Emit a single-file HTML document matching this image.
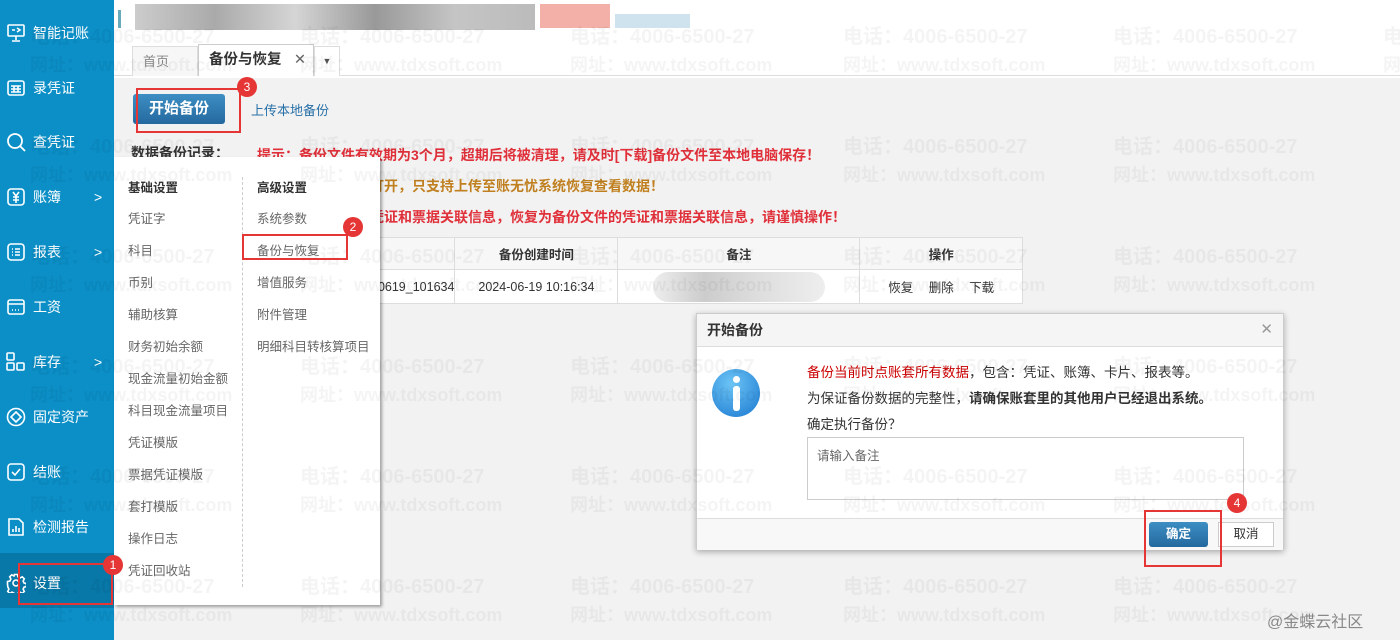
<!DOCTYPE html>
<html><head><meta charset="utf-8"><style>
*{margin:0;padding:0;box-sizing:border-box}
body{width:1400px;height:640px;overflow:hidden;background:#f2f2f2;font-family:"Liberation Sans","Noto Sans CJK SC",sans-serif;position:relative;font-size:13px;color:#333}
.abs{position:absolute}
.side{left:0;top:0;width:114px;height:640px;background:#0b8fc6}
.si{position:absolute;left:0;width:114px;height:40px;color:#fff;font-size:14px;line-height:40px;padding-left:33px}
.si svg{position:absolute;left:6px;top:10px}
.si .ar{position:absolute;left:94px;top:0;font-size:14px}
.wm{position:absolute;color:rgba(0,0,0,0.045);font-weight:bold;font-size:20px;white-space:nowrap;z-index:50;pointer-events:none}
.wm2{font-size:18px}
.red{color:#e0303a}
.badge{position:absolute;width:20px;height:20px;border-radius:50%;background:#e53535;color:#fff;font-size:12px;line-height:20px;text-align:center;z-index:60}
.rbox{position:absolute;border:2px solid #e53535;z-index:55}
.menu{left:114px;top:157px;width:266px;height:448px;background:#fff;box-shadow:2px 2px 3px rgba(0,0,0,.35);z-index:20}
.mi{position:absolute;font-size:12.5px;color:#666}
.btn{border-radius:3px;color:#fff;font-weight:bold;background:linear-gradient(#3d8ec3,#24699f);text-align:center}
td,th{border:1px solid #ddd}
</style></head><body>
<div class="abs side"></div>
<div class="si" style="top:13px"><svg width="20" height="20" viewBox="0 0 20 20" fill="none" stroke="#fff" stroke-width="1.6"><rect x="2" y="2" width="16" height="11" rx="1"/><path d="M10 13v4M6 18h8M6 7l3 0M11 5l3 2-3 2"/></svg>智能记账</div>
<div class="si" style="top:68px"><svg width="20" height="20" viewBox="0 0 20 20" fill="none" stroke="#fff" stroke-width="1.6"><rect x="2" y="3" width="16" height="14" rx="2"/><path d="M5 8h10M5 11h10M5 14h10M8 8v6M12 8v6"/></svg>录凭证</div>
<div class="si" style="top:122px"><svg width="22" height="22" viewBox="0 0 22 22" fill="none" stroke="#fff" stroke-width="1.8"><circle cx="9" cy="9" r="7"/><path d="M14 14l5 5"/></svg>查凭证</div>
<div class="si" style="top:177px"><svg width="20" height="20" viewBox="0 0 20 20" fill="none" stroke="#fff" stroke-width="1.6"><rect x="2" y="2" width="16" height="16" rx="3"/><path d="M7 5l3 4 3-4M10 9v7M7 10h6M7 13h6"/></svg>账簿<span class="ar">&gt;</span></div>
<div class="si" style="top:232px"><svg width="20" height="20" viewBox="0 0 20 20" fill="none" stroke="#fff" stroke-width="1.6"><rect x="2" y="2" width="16" height="16" rx="3"/><path d="M6 7h1M9 7h5M6 10h1M9 10h5M6 13h1M9 13h5"/></svg>报表<span class="ar">&gt;</span></div>
<div class="si" style="top:287px"><svg width="20" height="20" viewBox="0 0 20 20" fill="none" stroke="#fff" stroke-width="1.6"><rect x="2" y="3" width="16" height="14" rx="2"/><path d="M2 7h16M6 13h1M9 13h1M12 13h1"/></svg>工资</div>
<div class="si" style="top:342px"><svg width="20" height="20" viewBox="0 0 20 20" fill="none" stroke="#fff" stroke-width="1.6"><rect x="1" y="1" width="7" height="7" rx="1"/><rect x="1" y="11" width="7" height="7" rx="1"/><rect x="11" y="11" width="7" height="7" rx="1"/></svg>库存<span class="ar">&gt;</span></div>
<div class="si" style="top:397px"><svg width="20" height="20" viewBox="0 0 20 20" fill="none" stroke="#fff" stroke-width="1.6"><circle cx="10" cy="10" r="8.5"/><path d="M10 5l5 5-5 5-5-5z"/></svg>固定资产</div>
<div class="si" style="top:452px"><svg width="20" height="20" viewBox="0 0 20 20" fill="none" stroke="#fff" stroke-width="1.6"><rect x="2" y="2" width="16" height="16" rx="3"/><path d="M6 10l3 3 5-6"/></svg>结账</div>
<div class="si" style="top:507px"><svg width="20" height="20" viewBox="0 0 20 20" fill="none" stroke="#fff" stroke-width="1.6"><path d="M3 2h10l4 4v12H3z"/><path d="M7 15v-3M10 15v-6M13 15v-4"/></svg>检测报告</div>
<div class="abs" style="left:0;top:553px;width:114px;height:55px;background:#0878a8"></div>
<div class="si" style="top:563px"><svg width="20" height="20" viewBox="0 0 20 20" fill="none" stroke="#fff" stroke-width="1.6"><circle cx="10" cy="10" r="3"/><path d="M8.5 1.5h3l.5 2.5 2 1 2.3-1.2 2 2-1.2 2.3 1 2 2.4.5v3l-2.4.5-1 2 1.2 2.3-2 2-2.3-1.2-2 1-.5 2.4h-3l-.5-2.4-2-1-2.3 1.2-2-2 1.2-2.3-1-2L1.5 11.5v-3l2.4-.5 1-2L3.7 3.8l2-2L8 3l.5-1.5z"/></svg>设置</div>
<div class="rbox" style="left:18px;top:563px;width:95px;height:42px"></div>
<div class="badge" style="left:103px;top:555px">1</div>

<div class="abs" style="left:114px;top:0;width:1286px;height:78px;background:#fff"></div>
<div class="abs" style="left:118px;top:10px;width:3px;height:18px;background:#6ab"></div>
<div class="abs" style="left:135px;top:4px;width:400px;height:26px;background:linear-gradient(90deg,#ccc,#aaa 20%,#d5d5d5 40%,#999 60%,#c5c5c5 80%,#bbb)"></div>
<div class="abs" style="left:540px;top:4px;width:70px;height:24px;background:#f2b0a8"></div>
<div class="abs" style="left:615px;top:14px;width:75px;height:14px;background:#cfe3ef"></div>
<div class="abs" style="left:114px;top:75px;width:1286px;height:1px;background:#ddd"></div>
<div class="abs" style="left:132px;top:46px;width:66px;height:30px;border:1px solid #ddd;border-bottom:none;background:#f7f7f7;color:#888;line-height:29px;padding-left:10px">首页</div>
<div class="abs" style="left:198px;top:44px;width:116px;height:32px;border:1px solid #ccc;border-bottom:none;background:#fff;line-height:31px;padding-left:10px;font-size:14.5px;color:#333;font-weight:bold">备份与恢复<span style="position:absolute;right:7px;font-weight:normal;color:#666">✕</span></div>
<div class="abs" style="left:314px;top:46px;width:26px;height:30px;border:1px solid #ddd;border-bottom:none;background:#fff;text-align:center;line-height:29px;color:#555;font-size:9px">▼</div>

<div class="abs btn" style="left:133px;top:94px;width:92px;height:30px;line-height:30px;font-size:15px">开始备份</div>
<div class="rbox" style="left:136px;top:88px;width:105px;height:45px"></div>
<div class="badge" style="left:237px;top:77px">3</div>
<div class="abs" style="left:251px;top:100px;color:#2870a8;font-size:13px">上传本地备份</div>

<div class="abs" style="left:131px;top:143px;font-size:14px;font-weight:bold;color:#333">数据备份记录：</div>
<div class="abs red" style="left:257px;top:145px;font-size:14px;font-weight:bold">提示：备份文件有效期为3个月，超期后将被清理，请及时[下载]备份文件至本地电脑保存！</div>
<div class="abs" style="left:370px;top:176px;font-size:14px;font-weight:bold;color:#c08020">打开，只支持上传至账无忧系统恢复查看数据！</div>
<div class="abs red" style="left:370px;top:207px;font-size:14px;font-weight:bold">凭证和票据关联信息，恢复为备份文件的凭证和票据关联信息，请谨慎操作！</div>

<table class="abs" style="left:370px;top:237px;width:653px;height:67px;border-collapse:collapse;background:#fff;font-size:12.5px">
<tr style="height:32px;background:#f7f7f7"><th style="width:84px"></th><th style="width:163px">备份创建时间</th><th style="width:242px">备注</th><th>操作</th></tr>
<tr><td style="text-align:right;overflow:hidden">40619_101634</td><td style="text-align:center">2024-06-19 10:16:34</td><td><div style="margin:0 auto;width:172px;height:30px;border-radius:15px;background:linear-gradient(90deg,#eee,#ccc 30%,#ddd 60%,#eee)"></div></td><td style="text-align:center;word-spacing:12px">恢复 删除 下载</td></tr>
</table>

<div class="abs menu">
<div class="abs" style="left:128px;top:20px;border-left:1px dashed #ccc;height:410px"></div>
<div class="mi" style="left:14px;top:20px;color:#333;font-weight:bold">基础设置</div>
<div class="mi" style="left:143px;top:20px;color:#333;font-weight:bold">高级设置</div>
<div class="mi" style="left:14px;top:51px">凭证字</div>
<div class="mi" style="left:14px;top:83px">科目</div>
<div class="mi" style="left:14px;top:115px">币别</div>
<div class="mi" style="left:14px;top:147px">辅助核算</div>
<div class="mi" style="left:14px;top:179px">财务初始余额</div>
<div class="mi" style="left:14px;top:211px">现金流量初始金额</div>
<div class="mi" style="left:14px;top:243px">科目现金流量项目</div>
<div class="mi" style="left:14px;top:275px">凭证模版</div>
<div class="mi" style="left:14px;top:307px">票据凭证模版</div>
<div class="mi" style="left:14px;top:339px">套打模版</div>
<div class="mi" style="left:14px;top:371px">操作日志</div>
<div class="mi" style="left:14px;top:403px">凭证回收站</div>
<div class="mi" style="left:143px;top:51px">系统参数</div>
<div class="mi" style="left:143px;top:83px">备份与恢复</div>
<div class="mi" style="left:143px;top:115px">增值服务</div>
<div class="mi" style="left:143px;top:147px">附件管理</div>
<div class="mi" style="left:143px;top:179px">明细科目转核算项目</div>
</div>
<div class="rbox" style="left:242px;top:234px;width:106px;height:26px"></div>
<div class="badge" style="left:343px;top:217px">2</div>

<div class="abs" style="left:696px;top:313px;width:588px;height:237px;background:#fff;border:1px solid #ccc;box-shadow:0 2px 6px rgba(0,0,0,.3);z-index:30">
<div style="height:33px;background:#f5f5f5;border-bottom:1px solid #ddd;line-height:32px;padding-left:10px;font-weight:bold;font-size:14px">开始备份<span style="position:absolute;right:10px;top:0;color:#999;font-weight:normal;font-size:15px">✕</span></div>
<div class="abs" style="left:15px;top:55px;width:48px;height:48px;border-radius:50%;background:radial-gradient(circle at 40% 30%,#6cc4f5,#1a78d0)"><div style="position:absolute;left:21px;top:7px;width:7px;height:7px;border-radius:50%;background:#fff"></div><div style="position:absolute;left:21px;top:17px;width:7px;height:25px;border-radius:3px;background:#fff"></div></div>
<div class="abs" style="left:110px;top:46px;font-size:13.5px;line-height:26px;color:#333"><span style="color:#c00">备份当前时点账套所有数据</span>，包含：凭证、账簿、卡片、报表等。<br>为保证备份数据的完整性，<b>请确保账套里的其他用户已经退出系统。</b><br>确定执行备份？</div>
<div class="abs" style="left:110px;top:123px;width:437px;height:63px;border:1px solid #ccc;color:#666;padding:7px 9px;font-size:12.5px">请输入备注</div>
<div class="abs" style="left:0;top:204px;width:586px;height:32px;border-top:1px solid #ddd;background:#f8f8f8"></div>
<div class="abs btn" style="left:452px;top:208px;width:59px;height:25px;line-height:25px;font-size:12.5px">确定</div>
<div class="abs" style="left:521px;top:208px;width:56px;height:25px;line-height:23px;border:1px solid #ccc;background:#fff;text-align:center;font-size:12.5px">取消</div>
</div>
<div class="rbox" style="left:1144px;top:510px;width:78px;height:57px"></div>
<div class="badge" style="left:1227px;top:493px">4</div>

<div class="abs" style="left:1267px;top:608px;color:#888;font-size:16px;z-index:60">@金蝶云社区</div>

<div class="wm" style="left:30px;top:20px">电话：4006-6500-27</div><div class="wm wm2" style="left:30px;top:51px">网址：www.tdxsoft.com</div>
<div class="wm" style="left:300px;top:20px">电话：4006-6500-27</div><div class="wm wm2" style="left:300px;top:51px">网址：www.tdxsoft.com</div>
<div class="wm" style="left:570px;top:20px">电话：4006-6500-27</div><div class="wm wm2" style="left:570px;top:51px">网址：www.tdxsoft.com</div>
<div class="wm" style="left:843px;top:20px">电话：4006-6500-27</div><div class="wm wm2" style="left:843px;top:51px">网址：www.tdxsoft.com</div>
<div class="wm" style="left:1113px;top:20px">电话：4006-6500-27</div><div class="wm wm2" style="left:1113px;top:51px">网址：www.tdxsoft.com</div>
<div class="wm" style="left:1383px;top:20px">电话</div><div class="wm wm2" style="left:1383px;top:51px">网址</div>
<div class="wm" style="left:30px;top:130px">电话：4006-6500-27</div><div class="wm wm2" style="left:30px;top:161px">网址：www.tdxsoft.com</div>
<div class="wm" style="left:300px;top:130px">电话：4006-6500-27</div><div class="wm wm2" style="left:300px;top:161px">网址：www.tdxsoft.com</div>
<div class="wm" style="left:570px;top:130px">电话：4006-6500-27</div><div class="wm wm2" style="left:570px;top:161px">网址：www.tdxsoft.com</div>
<div class="wm" style="left:843px;top:130px">电话：4006-6500-27</div><div class="wm wm2" style="left:843px;top:161px">网址：www.tdxsoft.com</div>
<div class="wm" style="left:1113px;top:130px">电话：4006-6500-27</div><div class="wm wm2" style="left:1113px;top:161px">网址：www.tdxsoft.com</div>
<div class="wm" style="left:30px;top:240px">电话：4006-6500-27</div><div class="wm wm2" style="left:30px;top:271px">网址：www.tdxsoft.com</div>
<div class="wm" style="left:300px;top:240px">电话：4006-6500-27</div><div class="wm wm2" style="left:300px;top:271px">网址：www.tdxsoft.com</div>
<div class="wm" style="left:570px;top:240px">电话：4006-6500-27</div><div class="wm wm2" style="left:570px;top:271px">网址：www.tdxsoft.com</div>
<div class="wm" style="left:843px;top:240px">电话：4006-6500-27</div><div class="wm wm2" style="left:843px;top:271px">网址：www.tdxsoft.com</div>
<div class="wm" style="left:1113px;top:240px">电话：4006-6500-27</div><div class="wm wm2" style="left:1113px;top:271px">网址：www.tdxsoft.com</div>
<div class="wm" style="left:30px;top:350px">电话：4006-6500-27</div><div class="wm wm2" style="left:30px;top:381px">网址：www.tdxsoft.com</div>
<div class="wm" style="left:300px;top:350px">电话：4006-6500-27</div><div class="wm wm2" style="left:300px;top:381px">网址：www.tdxsoft.com</div>
<div class="wm" style="left:570px;top:350px">电话：4006-6500-27</div><div class="wm wm2" style="left:570px;top:381px">网址：www.tdxsoft.com</div>
<div class="wm" style="left:843px;top:350px">电话：4006-6500-27</div><div class="wm wm2" style="left:843px;top:381px">网址：www.tdxsoft.com</div>
<div class="wm" style="left:1113px;top:350px">电话：4006-6500-27</div><div class="wm wm2" style="left:1113px;top:381px">网址：www.tdxsoft.com</div>
<div class="wm" style="left:30px;top:460px">电话：4006-6500-27</div><div class="wm wm2" style="left:30px;top:491px">网址：www.tdxsoft.com</div>
<div class="wm" style="left:300px;top:460px">电话：4006-6500-27</div><div class="wm wm2" style="left:300px;top:491px">网址：www.tdxsoft.com</div>
<div class="wm" style="left:570px;top:460px">电话：4006-6500-27</div><div class="wm wm2" style="left:570px;top:491px">网址：www.tdxsoft.com</div>
<div class="wm" style="left:843px;top:460px">电话：4006-6500-27</div><div class="wm wm2" style="left:843px;top:491px">网址：www.tdxsoft.com</div>
<div class="wm" style="left:1113px;top:460px">电话：4006-6500-27</div><div class="wm wm2" style="left:1113px;top:491px">网址：www.tdxsoft.com</div>
<div class="wm" style="left:30px;top:570px">电话：4006-6500-27</div><div class="wm wm2" style="left:30px;top:601px">网址：www.tdxsoft.com</div>
<div class="wm" style="left:300px;top:570px">电话：4006-6500-27</div><div class="wm wm2" style="left:300px;top:601px">网址：www.tdxsoft.com</div>
<div class="wm" style="left:570px;top:570px">电话：4006-6500-27</div><div class="wm wm2" style="left:570px;top:601px">网址：www.tdxsoft.com</div>
<div class="wm" style="left:843px;top:570px">电话：4006-6500-27</div><div class="wm wm2" style="left:843px;top:601px">网址：www.tdxsoft.com</div>
<div class="wm" style="left:1113px;top:570px">电话：4006-6500-27</div><div class="wm wm2" style="left:1113px;top:601px">网址：www.tdxsoft.com</div>
</body></html>
